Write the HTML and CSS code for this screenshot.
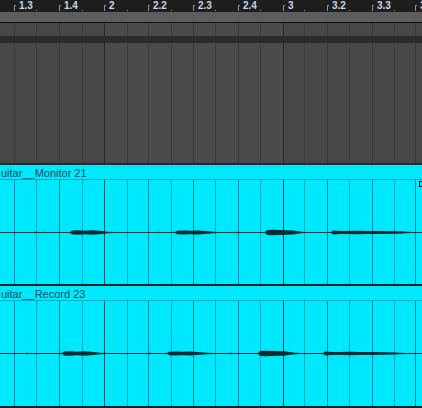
FILE: index.html
```html
<!DOCTYPE html>
<html>
<head>
<meta charset="utf-8">
<link rel="stylesheet" href="styles.css">
</head>
<body>
<div class="view">
  <div class="ruler grid">
    <span></span>
    <span class="beat"><i class="tick"></i><b>1.3</b></span><span class="half"><i class="dot"></i></span>
    <span class="beat"><i class="tick"></i><b>1.4</b></span><span class="half"><i class="dot"></i></span>
    <span class="beat"><i class="tick"></i><b>2</b></span><span class="half"><i class="dot"></i></span>
    <span class="beat"><i class="tick"></i><b>2.2</b></span><span class="half"><i class="dot"></i></span>
    <span class="beat"><i class="tick"></i><b>2.3</b></span><span class="half"><i class="dot"></i></span>
    <span class="beat"><i class="tick"></i><b>2.4</b></span><span class="half"><i class="dot"></i></span>
    <span class="beat"><i class="tick"></i><b>3</b></span><span class="half"><i class="dot"></i></span>
    <span class="beat"><i class="tick"></i><b>3.2</b></span><span class="half"><i class="dot"></i></span>
    <span class="beat"><i class="tick"></i><b>3.3</b></span><span class="half"><i class="dot"></i></span>
    <span class="beat"><i class="tick"></i><b>3.4</b></span><span></span>
  </div>
  <div class="strip"></div>

  <div class="lane grid grey top"><span></span><span></span><span></span><span></span><span></span><span></span><span></span><span></span><span></span><span></span><span></span><span></span><span></span><span></span><span></span><span></span><span></span><span></span><span></span><span></span></div>
  <div class="band"></div>
  <div class="lane grid grey main"><span></span><span></span><span></span><span></span><span></span><span></span><span></span><span></span><span></span><span></span><span></span><span></span><span></span><span></span><span></span><span></span><span></span><span></span><span></span><span></span></div>

  <div class="clip first">
    <div class="clip-head">uitar__Monitor 21</div>
    <div class="clip-body">
      <div class="grid cyan"><span></span><span></span><span></span><span></span><span></span><span></span><span></span><span></span><span></span><span></span><span></span><span></span><span></span><span></span><span></span><span></span><span></span><span></span><span></span><span></span></div>
      <svg class="wave" viewBox="0 0 422 104" width="422" height="104">
        <rect x="0" y="52" width="422" height="1" class="base"/>
        <rect x="34" y="51.5" width="2" height="2" class="faint"/>
        <rect x="43" y="51.5" width="2" height="2" class="faint"/>
        <rect x="157" y="51.5" width="2" height="2" class="faint"/>
        <rect x="236" y="51.5" width="3" height="2" class="faint"/>
        <path class="faint" d="M66 52.5 L70 51.5 L112 51.5 L116 52.5 L112 53.5 L70 53.5 Z"/>
        <path d="M70 52.5 L72 50.6 L78 50.3 L85 50.7 L92 50.2 L99 50.7 L104 51.2 L108 52 L108 53 L104 53.8 L99 54.3 L92 54.8 L85 54.3 L78 54.7 L72 54.4 Z"/>
        <path class="faint" d="M172 52.5 L175 51.5 L216 51.5 L220 52.5 L216 53.5 L175 53.5 Z"/>
        <path d="M175 52.5 L177 50.7 L184 50.4 L191 50.8 L198 50.5 L205 51 L210 51.4 L214 52 L214 53 L210 53.6 L205 54 L198 54.5 L191 54.2 L184 54.6 L177 54.3 Z"/>
        <path class="faint" d="M262 52.5 L265 51.5 L304 51.5 L308 52.5 L304 53.5 L265 53.5 Z"/>
        <path d="M265 52.5 L267 49.9 L273 49.7 L280 50 L287 50.3 L293 50.6 L298 51.2 L302 52 L302 53 L298 53.8 L293 54.4 L287 54.7 L280 55 L273 55.3 L267 55.1 Z"/>
        <path class="faint" d="M327 52.5 L331 51.5 L410 51.5 L414 52.5 L410 53.5 L331 53.5 Z"/>
        <path d="M331 52.5 L333 50.6 L340 50.9 L348 51.1 L358 50.8 L368 51.1 L380 50.9 L392 51.2 L402 51.5 L408 52 L408 53 L402 53.5 L392 53.8 L380 54.1 L368 53.9 L358 54.2 L348 53.9 L340 54.1 L333 54.4 Z"/>
      </svg>
      <i class="marker"></i>
    </div>
  </div>

  <div class="clip second">
    <div class="clip-head">uitar__Record 23</div>
    <div class="clip-body">
      <div class="grid cyan"><span></span><span></span><span></span><span></span><span></span><span></span><span></span><span></span><span></span><span></span><span></span><span></span><span></span><span></span><span></span><span></span><span></span><span></span><span></span><span></span></div>
      <svg class="wave" viewBox="0 0 422 105" width="422" height="105">
        <rect x="0" y="52" width="422" height="1" class="base"/>
        <rect x="26" y="51.5" width="2" height="2" class="faint"/>
        <rect x="149" y="51.5" width="2" height="2" class="faint"/>
        <rect x="229" y="51.5" width="3" height="2" class="faint"/>
        <path class="faint" d="M58 52.5 L62 51.5 L104 51.5 L108 52.5 L104 53.5 L62 53.5 Z"/>
        <path d="M62 52.5 L64 50.6 L70 50.3 L77 50.7 L84 50.2 L91 50.7 L96 51.2 L100 52 L100 53 L96 53.8 L91 54.3 L84 54.8 L77 54.3 L70 54.7 L64 54.4 Z"/>
        <path class="faint" d="M164 52.5 L167 51.5 L211 51.5 L215 52.5 L211 53.5 L167 53.5 Z"/>
        <path d="M167 52.5 L169 50.7 L176 50.4 L183 50.8 L190 50.5 L197 51 L203 51.4 L208 52 L208 53 L203 53.6 L197 54 L190 54.5 L183 54.2 L176 54.6 L169 54.3 Z"/>
        <path class="faint" d="M255 52.5 L258 51.5 L298 51.5 L302 52.5 L298 53.5 L258 53.5 Z"/>
        <path d="M258 52.5 L260 49.9 L266 49.7 L273 50 L280 50.3 L286 50.6 L291 51.2 L296 52 L296 53 L291 53.8 L286 54.4 L280 54.7 L273 55 L266 55.3 L260 55.1 Z"/>
        <path class="faint" d="M319 52.5 L323 51.5 L404 51.5 L408 52.5 L404 53.5 L323 53.5 Z"/>
        <path d="M323 52.5 L325 50.6 L332 50.9 L340 51.1 L350 50.8 L360 51.1 L372 50.9 L384 51.2 L394 51.5 L400 52 L400 53 L394 53.5 L384 53.8 L372 54.1 L360 53.9 L350 54.2 L340 53.9 L332 54.1 L325 54.4 Z"/>
      </svg>
    </div>
  </div>
</div>
</body>
</html>
```
FILE: styles.css
```css
:root {
  --cols: 14px 22px 23px 23px 22px 23px 21px 23px 22px 22px 23px 22px 23px 21px 23px 22px 23px 22px 21px 1fr;
  --cyan: #00e8fe;
}

html, body {
  margin: 0;
  padding: 0;
  background: #1e1e1e;
}

.view {
  width: 422px;
  height: 408px;
  overflow: hidden;
  display: flex;
  flex-direction: column;
  font-family: "Liberation Sans", Arial, sans-serif;
}

.grid {
  display: grid;
  grid-template-columns: var(--cols);
}

.grid > span {
  box-sizing: border-box;
  min-width: 0;
}

/* ruler */
.ruler {
  height: 12px;
  flex: none;
  background: #1e1e1e;
}

.ruler > span {
  display: flex;
  align-items: flex-start;
  white-space: nowrap;
  position: relative;
}

.ruler .tick {
  display: block;
  width: 2px;
  height: 6px;
  margin-top: 5px;
  box-sizing: border-box;
  border-left: 1px solid #8c8c8c;
  border-top: 1px solid #8c8c8c;
  flex: none;
}

.ruler b {
  display: block;
  margin-left: 3px;
  font-size: 10px;
  line-height: 12px;
  font-weight: bold;
  color: #c6d6e8;
}

.ruler .dot {
  display: block;
  width: 1px;
  height: 1px;
  margin-top: 10px;
  background: #8c8c8c;
}

.strip {
  height: 10px;
  flex: none;
  background: #5d5d5d;
  border-bottom: 1px solid #111111;
}

/* grey lanes */
.lane {
  flex: none;
}

.lane.top {
  height: 13px;
}

.lane.main {
  height: 120px;
}

.band {
  height: 7px;
  flex: none;
  background: #2b2b2b;
}

.grey > span {
  background: #474747;
}

.grey > span:nth-child(n+6):nth-child(-n+13) {
  background: #4b4b4b;
}

.grey > span:nth-child(n+2) {
  border-left: 1px solid #3c3c3c;
}

.grey > span:nth-child(even) {
  border-left-color: #383838;
}

.grey > span:nth-child(6),
.grey > span:nth-child(14) {
  border-left-color: #252525;
}

/* clips */
.clip {
  flex: none;
  background: var(--cyan);
  border-top: 2px solid #262626;
}

.clip-head {
  height: 15px;
  box-sizing: border-box;
  padding-left: 1px;
  font-size: 11px;
  line-height: 17px;
  color: #0f4c56;
  white-space: nowrap;
  overflow: hidden;
  border-bottom: 1px solid #07aabd;
}

.clip.first .clip-body {
  height: 104px;
}

.clip.second .clip-body {
  height: 105px;
}

.clip-body {
  position: relative;
}

.clip-body .grid {
  height: 100%;
}

.cyan > span:nth-child(n+2) {
  border-left: 1px solid #00a8bb;
}

.cyan > span:nth-child(even) {
  border-left-color: #00889a;
}

.cyan > span:nth-child(6),
.cyan > span:nth-child(14) {
  border-left-color: #134850;
}

.wave {
  position: absolute;
  left: 0;
  top: 0;
  display: block;
}

.wave path,
.wave .base {
  fill: #0b2b31;
}

.wave .faint {
  fill: #0b2b31;
  opacity: 0.35;
}

.marker {
  position: absolute;
  left: 419px;
  top: 1px;
  width: 6px;
  height: 6px;
  box-sizing: border-box;
  border: 1px solid #000000;
}
```
